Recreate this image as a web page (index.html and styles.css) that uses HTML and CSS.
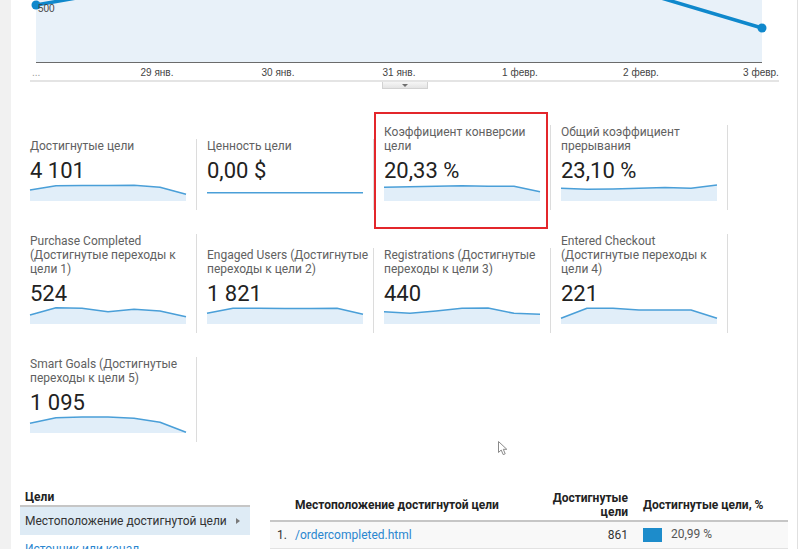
FILE: index.html
```html
<!DOCTYPE html>
<html lang="ru">
<head>
    <meta charset="UTF-8">
    <title>Цели — обзор</title>
    <link rel="stylesheet" href="styles.css">
</head>
<body>
    <div class="page">
        <!-- график сеансов -->
        <svg class="chart" width="786" height="80" viewBox="11 0 786 80">
            <rect x="36" y="0" width="726" height="62" fill="#e8f1f9"/>
            <line x1="36" y1="62.5" x2="762" y2="62.5" stroke="#6b6b6b" stroke-width="1"/>
            <polyline points="36,5 157,-16 641,-8 762,28" fill="none" stroke="#0f88cc" stroke-width="3.5" stroke-linejoin="round"/>
            <circle cx="36" cy="5" r="4.5" fill="#0f88cc"/>
            <circle cx="762" cy="28" r="4.5" fill="#0f88cc"/>
            <text class="chart-val" x="38" y="11.5">500</text>
            <text class="axis-label is-muted" x="32" y="76">...</text>
            <text class="axis-label" x="157" y="76" text-anchor="middle">29 янв.</text>
            <text class="axis-label" x="278" y="76" text-anchor="middle">30 янв.</text>
            <text class="axis-label" x="399" y="76" text-anchor="middle">31 янв.</text>
            <text class="axis-label" x="520" y="76" text-anchor="middle">1 февр.</text>
            <text class="axis-label" x="641" y="76" text-anchor="middle">2 февр.</text>
            <text class="axis-label" x="761" y="76" text-anchor="middle">3 февр.</text>
        </svg>
        <div class="chart-foot">
            <div class="toggle"><span class="toggle-arrow"></span></div>
        </div>

        <!-- сводка по целям -->
        <div class="scorecards">
            <div class="card">
                <div class="card-title">Достигнутые цели</div>
                <div class="card-value">4 101</div>
                <svg class="spark" viewBox="0 0 156 18">
                    <polygon points="0,7 26,2.7 52,2.5 78,2.5 104,2.3 130,4.3 156,11.3 156,18 0,18"/>
                    <polyline points="0,7 26,2.7 52,2.5 78,2.5 104,2.3 130,4.3 156,11.3"/>
                </svg>
            </div>
            <div class="card">
                <div class="card-title">Ценность цели</div>
                <div class="card-value">0,00 $</div>
                <svg class="spark" viewBox="0 0 156 18">
                    <polyline points="0,9.7 156,9.7"/>
                </svg>
            </div>
            <div class="card">
                <div class="card-title">Коэффициент конверсии цели</div>
                <div class="card-value">20,33 %</div>
                <svg class="spark" viewBox="0 0 156 18">
                    <polygon points="0,4.3 26,3.8 52,3.3 78,2.8 104,3.2 130,3.2 156,8.7 156,18 0,18"/>
                    <polyline points="0,4.3 26,3.8 52,3.3 78,2.8 104,3.2 130,3.2 156,8.7"/>
                </svg>
                <span class="highlight"></span>
            </div>
            <div class="card">
                <div class="card-title">Общий коэффициент прерывания</div>
                <div class="card-value">23,10 %</div>
                <svg class="spark" viewBox="0 0 156 18">
                    <polygon points="0,5.3 26,6.3 52,6 78,5.3 104,4.5 130,5.3 156,2 156,18 0,18"/>
                    <polyline points="0,5.3 26,6.3 52,6 78,5.3 104,4.5 130,5.3 156,2"/>
                </svg>
            </div>

            <div class="card">
                <div class="card-title">Purchase Completed (Достигнутые переходы к цели 1)</div>
                <div class="card-value">524</div>
                <svg class="spark" viewBox="0 0 156 18">
                    <polygon points="0,9 26,1.7 52,2.3 78,5.7 104,3.3 130,5 156,10.7 156,18 0,18"/>
                    <polyline points="0,9 26,1.7 52,2.3 78,5.7 104,3.3 130,5 156,10.7"/>
                </svg>
            </div>
            <div class="card">
                <div class="card-title">Engaged Users (Достигнутые переходы к цели 2)</div>
                <div class="card-value">1 821</div>
                <svg class="spark" viewBox="0 0 156 18">
                    <polygon points="0,7.3 26,2.3 52,2.3 78,2.5 104,2.5 130,2.3 156,8.3 156,18 0,18"/>
                    <polyline points="0,7.3 26,2.3 52,2.3 78,2.5 104,2.5 130,2.3 156,8.3"/>
                </svg>
            </div>
            <div class="card">
                <div class="card-title">Registrations (Достигнутые переходы к цели 3)</div>
                <div class="card-value">440</div>
                <svg class="spark" viewBox="0 0 156 18">
                    <polygon points="0,5.7 26,7.3 52,5 78,2.3 104,2 130,7.3 156,8.3 156,18 0,18"/>
                    <polyline points="0,5.7 26,7.3 52,5 78,2.3 104,2 130,7.3 156,8.3"/>
                </svg>
            </div>
            <div class="card">
                <div class="card-title">Entered Checkout (Достигнутые переходы к цели 4)</div>
                <div class="card-value">221</div>
                <svg class="spark" viewBox="0 0 156 18">
                    <polygon points="0,12.3 26,2.3 52,2.3 78,4 104,4 130,4 156,12.3 156,18 0,18"/>
                    <polyline points="0,12.3 26,2.3 52,2.3 78,4 104,4 130,4 156,12.3"/>
                </svg>
            </div>

            <div class="card">
                <div class="card-title">Smart Goals (Достигнутые переходы к цели 5)</div>
                <div class="card-value">1 095</div>
                <svg class="spark" viewBox="0 0 156 18">
                    <polygon points="0,8.3 26,2.7 52,2 78,2 104,3.3 130,7.3 156,17.3 156,18 0,18"/>
                    <polyline points="0,8.3 26,2.7 52,2 78,2 104,3.3 130,7.3 156,17.3"/>
                </svg>
            </div>
        </div>

        <!-- таблица по параметру -->
        <div class="report">
            <div class="dims">
                <div class="dims-title">Цели</div>
                <div class="dims-item is-active">
                    <span>Местоположение достигнутой цели</span>
                    <span class="caret"></span>
                </div>
                <div class="dims-item"><a href="#">Источник или канал</a></div>
            </div>

            <table class="goals-table">
                <colgroup>
                    <col class="col-idx">
                    <col>
                    <col class="col-num">
                    <col class="col-pct">
                </colgroup>
                <thead>
                    <tr>
                        <th></th>
                        <th>Местоположение достигнутой цели</th>
                        <th class="num">Достигнутые цели</th>
                        <th class="pct">Достигнутые цели, %</th>
                    </tr>
                </thead>
                <tbody>
                    <tr>
                        <td class="idx">1.</td>
                        <td><a href="#">/ordercompleted.html</a></td>
                        <td class="num">861</td>
                        <td class="pct"><span class="bar" style="width: 19px"></span>20,99 %</td>
                    </tr>
                </tbody>
            </table>
        </div>

        <svg class="cursor" width="12" height="16" viewBox="0 0 12 16">
            <path d="M0.5 0.5 L0.5 11.5 L3.2 9 L5.2 13.6 L7.2 12.8 L5.3 8.3 L8.8 8.3 Z" fill="#fff" stroke="#8a8a8a" stroke-width="1" stroke-linejoin="round"/>
        </svg>
    </div>
</body>
</html>
```

FILE: styles.css
```css
/* Базовый сброс */
* {
    margin: 0;
    padding: 0;
    box-sizing: border-box;
}

body {
    width: 800px;
    height: 549px;
    overflow: hidden;
    background-color: #ffffff;
    font-family: Roboto, 'Noto Sans', sans-serif;
    color: #333333;
}

.page {
    position: relative;
    width: 798px;
    height: 549px;
    padding: 0 9px;
    border-left: 11px solid #f1f1f1;
    border-right: 1px solid #e0e0e0;
    overflow: hidden;
}

/* График */
.chart {
    display: block;
    margin: 0 -9px;
}

.axis-label,
.chart-val {
    font-family: 'Liberation Sans', Arial, sans-serif;
    font-size: 10px;
    fill: #444444;
}

.axis-label.is-muted {
    fill: #9a9a9a;
}

.chart-foot {
    margin: 0 9px 0 10px;
    border-top: 2px solid #e4e4e4;
}

.toggle {
    width: 46px;
    height: 7px;
    margin: 0 auto;
    display: flex;
    justify-content: center;
    align-items: center;
    background-image: linear-gradient(#f6f6f6, #e4e4e4);
    border: 1px solid #d2d2d2;
    border-top: none;
}

.toggle-arrow {
    width: 0;
    height: 0;
    border-left: 3px solid transparent;
    border-right: 3px solid transparent;
    border-top: 3px solid #6f6f6f;
}

/* Карточки показателей */
.scorecards {
    display: grid;
    grid-template-columns: repeat(4, 177px);
    row-gap: 24px;
    align-items: end;
    margin-top: 36px;
}

.card {
    position: relative;
    padding: 0 4px 9px 10px;
    border-right: 1px solid #dcdcdc;
}

.card-title {
    font-size: 12px;
    line-height: 14px;
    color: #616161;
}

.card-value {
    margin-top: 4px;
    font-size: 22px;
    line-height: 28px;
    color: #222222;
}

.spark {
    display: block;
    width: 156px;
    height: 18px;
    margin-top: -2px;
    overflow: visible;
}

.spark polygon {
    fill: #e1eef9;
}

.spark polyline {
    fill: none;
    stroke: #4a9fd8;
    stroke-width: 1.6;
    stroke-linejoin: round;
}

.highlight {
    position: absolute;
    top: -13px;
    bottom: -19px;
    left: 0;
    right: 2px;
    border: 2px solid #e3262b;
    pointer-events: none;
}

/* Отчет */
.report {
    display: flex;
    align-items: flex-start;
    gap: 20px;
    margin-top: 47px;
    font-size: 12px;
}

.dims {
    width: 230px;
    flex-shrink: 0;
}

.dims-title {
    padding-left: 5px;
    font-weight: bold;
    line-height: 16px;
    color: #222222;
    border-bottom: 2px solid #c6c6c6;
}

.dims-item {
    display: flex;
    justify-content: space-between;
    align-items: center;
    height: 28px;
    padding: 0 10px 0 5px;
}

.dims-item.is-active {
    background-color: #deebf5;
    color: #333333;
}

.dims-item a {
    color: #2a86cf;
    text-decoration: none;
}

.caret {
    width: 0;
    height: 0;
    border-top: 3.5px solid transparent;
    border-bottom: 3.5px solid transparent;
    border-left: 4px solid #7a7a7a;
}

.goals-table {
    flex: 1;
    border-collapse: collapse;
    table-layout: fixed;
}

.col-idx {
    width: 25px;
}

.col-num {
    width: 96px;
}

.col-pct {
    width: 152px;
}

.goals-table th {
    height: 32px;
    padding: 1px 0;
    font-weight: bold;
    line-height: 14px;
    text-align: left;
    vertical-align: middle;
    color: #222222;
    border-bottom: 2px solid #c6c6c6;
}

.goals-table td {
    height: 27px;
    background-color: #f8f8f8;
    border-bottom: 1px solid #e2e2e2;
    color: #333333;
    white-space: nowrap;
}

.goals-table .idx {
    padding-left: 7px;
}

.goals-table .num {
    text-align: right;
    padding-right: 8px;
}

.goals-table .pct {
    padding-left: 7px;
}

.goals-table td.pct {
    color: #555555;
}

.goals-table a {
    color: #2a86cf;
    text-decoration: none;
}

.bar {
    display: inline-block;
    height: 14px;
    margin-right: 9px;
    vertical-align: middle;
    background-color: #1d8ccb;
}

.cursor {
    position: absolute;
    left: 487px;
    top: 441px;
}
```
